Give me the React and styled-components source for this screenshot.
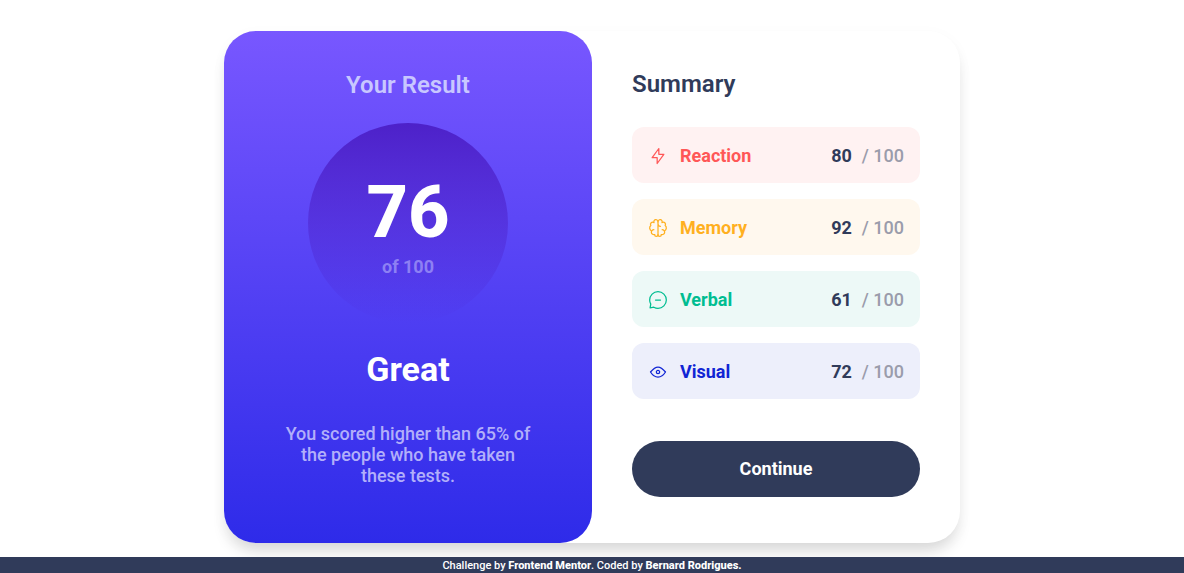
import React from "react";
import styled, { createGlobalStyle } from "styled-components";

const GlobalStyle = createGlobalStyle`
  *, *::before, *::after { box-sizing: border-box; }
  body {
    margin: 0;
    background: #fff;
    font-family: Roboto, "Liberation Sans", sans-serif;
    font-size: 18px;
    color: #303b5a;
  }
  h1, h2, p, ul { margin: 0; padding: 0; }
`;

const Page = styled.div`
  min-height: 100vh;
  display: flex;
  flex-direction: column;
`;

const Main = styled.main`
  flex: 1;
  display: flex;
  align-items: center;
  justify-content: center;
  padding-top: 16px;
`;

const Card = styled.div`
  width: 100%;
  max-width: 736px;
  display: grid;
  grid-template-columns: 1fr 1fr;
  border-radius: 32px;
  background: #fff;
  box-shadow: 0 12px 16px -4px rgba(0, 0, 0, 0.14), 0 4px 16px rgba(0, 0, 0, 0.03);

  @media (max-width: 640px) {
    grid-template-columns: 1fr;
  }
`;

const Result = styled.section`
  display: flex;
  flex-direction: column;
  align-items: center;
  padding: 40px 56px 56px;
  border-radius: 32px;
  background: linear-gradient(#7857ff, #2e2be9);
  color: #fff;
  text-align: center;
`;

const ResultTitle = styled.h1`
  font-size: 24px;
  font-weight: 600;
  line-height: 28px;
  color: #c8c7ff;
`;

const ScoreCircle = styled.div`
  display: flex;
  flex-direction: column;
  align-items: center;
  width: 200px;
  height: 200px;
  margin-top: 24px;
  padding-top: 52px;
  border-radius: 50%;
  background: linear-gradient(#4d21c9, rgba(37, 33, 201, 0));
`;

const Score = styled.strong`
  font-size: 72px;
  font-weight: 800;
  line-height: 76px;
`;

const ScoreTotal = styled.span`
  font-weight: 700;
  line-height: 32px;
  color: rgba(200, 199, 255, 0.5);
`;

const Verdict = styled.h2`
  margin-top: 24px;
  font-size: 34px;
  font-weight: 700;
  line-height: 44px;
`;

const Description = styled.p`
  max-width: 256px;
  margin-top: 32px;
  font-weight: 500;
  line-height: 21px;
  color: #b2affa;
`;

const Summary = styled.section`
  display: flex;
  flex-direction: column;
  padding: 40px 40px 46px;
`;

const SummaryTitle = styled.h2`
  font-size: 24px;
  font-weight: 600;
  line-height: 26px;
`;

const StatList = styled.ul`
  display: flex;
  flex-direction: column;
  gap: 16px;
  margin-top: 30px;
  list-style: none;
`;

const Stat = styled.li`
  display: flex;
  align-items: center;
  height: 56px;
  padding: 2px 16px 0;
  border-radius: 12px;
  background: ${(p) => p.$background};
  color: ${(p) => p.$color};
`;

const StatIcon = styled.svg`
  width: 20px;
  height: 20px;
  margin-right: 12px;
  fill: none;
  stroke: currentColor;
  stroke-width: 1.25;
  stroke-linecap: round;
  stroke-linejoin: round;
`;

const StatName = styled.span`
  flex: 1;
  font-weight: 700;
`;

const StatScore = styled.span`
  display: flex;
  gap: 10px;
  font-weight: 500;
  color: #9a9cab;
`;

const StatValue = styled.strong`
  font-weight: 700;
  color: #303b5a;
`;

const ContinueButton = styled.button`
  height: 56px;
  margin-top: 42px;
  border: 0;
  border-radius: 28px;
  background: #303b5a;
  color: #fff;
  font: inherit;
  font-weight: 700;
  cursor: pointer;
`;

const Footer = styled.footer`
  padding-top: 2px;
  background: #303b5a;
  color: #fff;
  font-size: 11px;
  font-weight: 500;
  line-height: 14px;
  text-align: center;
`;

const FooterLink = styled.a`
  color: inherit;
  font-weight: 800;
  text-decoration: none;
`;

const stats = [
  {
    name: "Reaction",
    score: 80,
    color: "#ff5757",
    background: "#fff2f2",
    paths: ["M10.833 8.333V2.5l-6.666 9.167h5V17.5l6.666-9.167h-5Z"],
  },
  {
    name: "Memory",
    score: 92,
    color: "#ffb01f",
    background: "#fff8ee",
    paths: [
      "M5.833 11.667a2.5 2.5 0 1 0 .834 4.858",
      "M3.553 13.004a3.333 3.333 0 0 1-.728-5.53m.025-.067a2.083 2.083 0 0 1 2.983-2.824m.199.054A2.083 2.083 0 1 1 10 3.75v12.917a1.667 1.667 0 0 1-3.333 0M10 5.833a2.5 2.5 0 0 0 2.5 2.5m1.667 3.334a2.5 2.5 0 1 1-.834 4.858",
      "M16.447 13.004a3.334 3.334 0 0 0 .728-5.53m-.025-.067a2.083 2.083 0 0 0-2.983-2.824M10 3.75a2.085 2.085 0 0 1 2.538-2.033 2.084 2.084 0 0 1 1.43 2.92m-.635 12.03a1.667 1.667 0 0 1-3.333 0",
    ],
  },
  {
    name: "Verbal",
    score: 61,
    color: "#00bd91",
    background: "#edf9f7",
    paths: [
      "M7.5 10h5M10 18.333A8.333 8.333 0 1 0 1.667 10c0 1.518.406 2.942 1.115 4.167l-.699 3.75 3.75-.699A8.295 8.295 0 0 0 10 18.333Z",
    ],
  },
  {
    name: "Visual",
    score: 72,
    color: "#1125d4",
    background: "#edeffb",
    paths: [
      "M10 11.667a1.667 1.667 0 1 0 0-3.334 1.667 1.667 0 0 0 0 3.334Z",
      "M17.5 10c-1.574 2.492-4.402 5-7.5 5s-5.926-2.508-7.5-5C4.416 7.632 6.66 5 10 5s5.584 2.632 7.5 5Z",
    ],
  },
];

export default function App() {
  return (
    <Page>
      <GlobalStyle />
      <Main>
        <Card>
          <Result>
            <ResultTitle>Your Result</ResultTitle>
            <ScoreCircle>
              <Score>76</Score>
              <ScoreTotal>of 100</ScoreTotal>
            </ScoreCircle>
            <Verdict>Great</Verdict>
            <Description>
              You scored higher than 65% of the people who have taken these tests.
            </Description>
          </Result>
          <Summary>
            <SummaryTitle>Summary</SummaryTitle>
            <StatList>
              {stats.map((s) => (
                <Stat key={s.name} $color={s.color} $background={s.background}>
                  <StatIcon viewBox="0 0 20 20" aria-hidden="true">
                    {s.paths.map((d) => (
                      <path key={d} d={d} />
                    ))}
                  </StatIcon>
                  <StatName>{s.name}</StatName>
                  <StatScore>
                    <StatValue>{s.score}</StatValue>
                    <span>/ 100</span>
                  </StatScore>
                </Stat>
              ))}
            </StatList>
            <ContinueButton type="button">Continue</ContinueButton>
          </Summary>
        </Card>
      </Main>
      <Footer>
        Challenge by <FooterLink href="#challenge">Frontend Mentor</FooterLink>. Coded by{" "}
        <FooterLink href="#author">Bernard Rodrigues.</FooterLink>
      </Footer>
    </Page>
  );
}
